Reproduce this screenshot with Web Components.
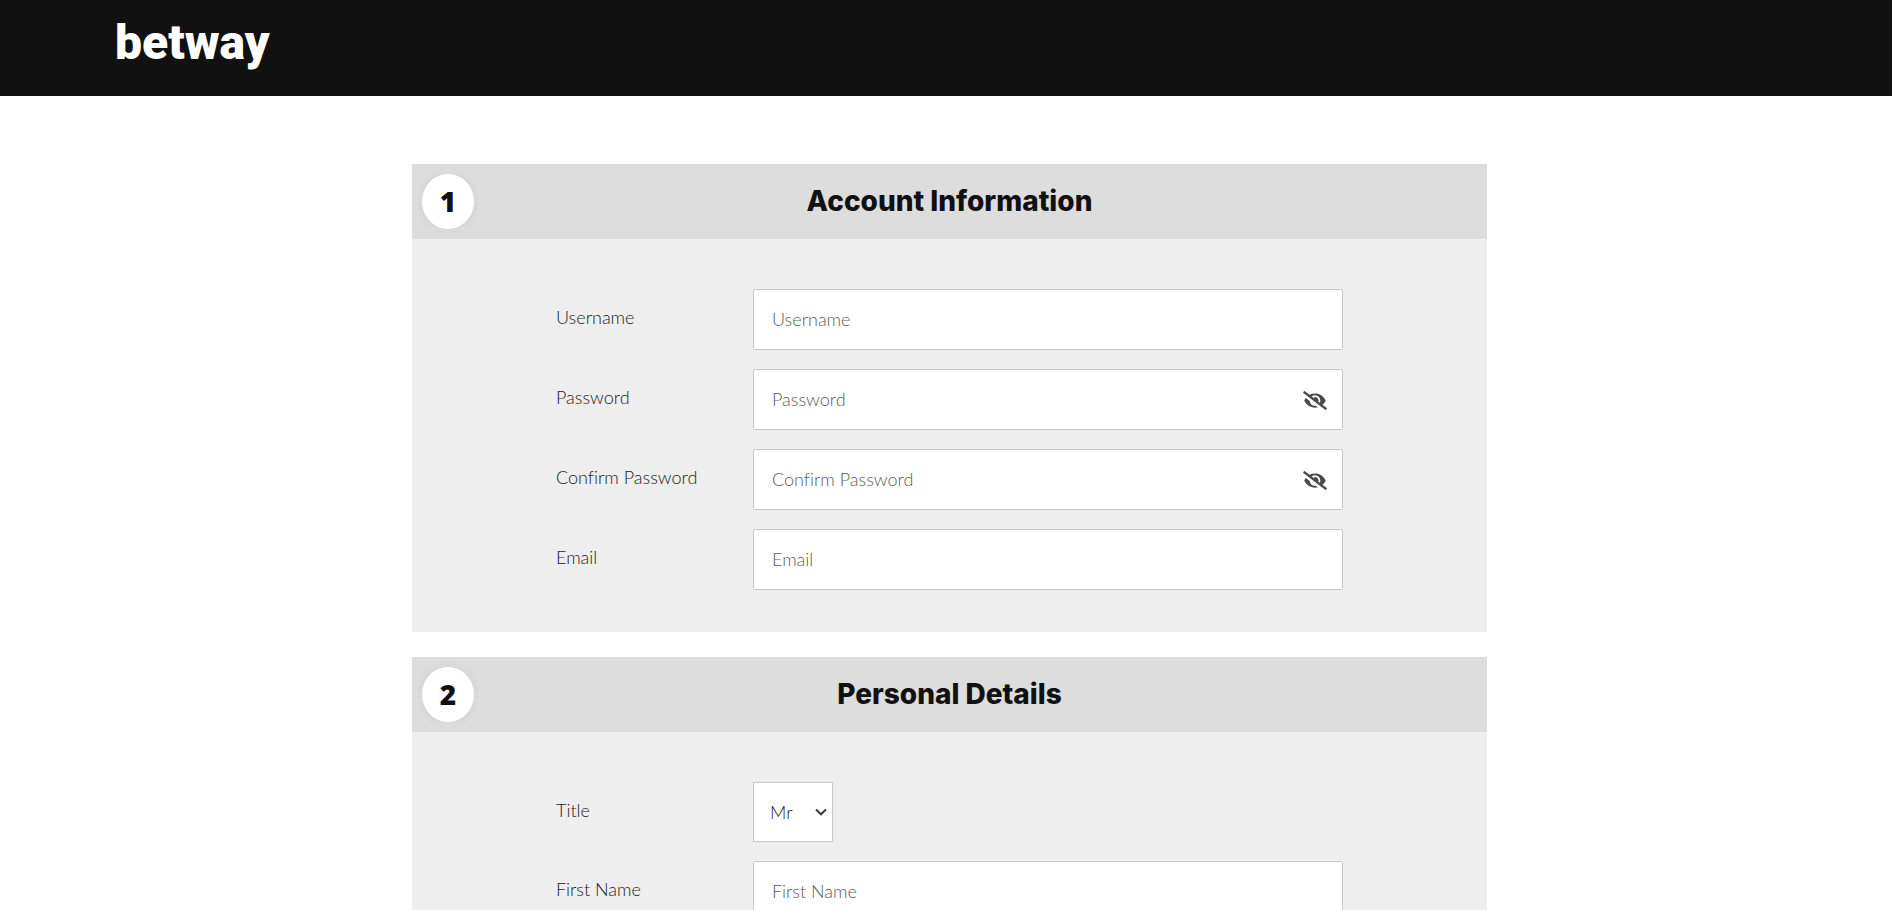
<!DOCTYPE html>
<html lang="en">
<head>
<meta charset="utf-8">
<meta name="viewport" content="width=device-width, initial-scale=1">
<title>betway</title>
<style>
  html,
  body {
    height: 100%;
    overflow: hidden;
  }

  body {
    margin: 0;
    background: #fff;
    color: #222;
    font-family: Lato, "Liberation Sans", sans-serif;
    font-size: 18px;
    font-weight: 300;
    font-variant-ligatures: none;
    --heading-font: Inter, "Open Sans", sans-serif;
    --number-font: "Open Sans", sans-serif;
    --logo-font: Roboto, sans-serif;
    --heading-color: #111;
    --border-color: #c8c8c8;
  }

  .page {
    height: 100%;
    overflow-y: auto;
    scrollbar-width: none;
  }
</style>
</head>
<body>

<div class="page">
  <site-header>betway</site-header>

  <register-form>
    <form-step number="1" heading="Account Information">
      <text-field label="Username"></text-field>
      <text-field label="Password" type="password"></text-field>
      <text-field label="Confirm Password" type="password"></text-field>
      <text-field label="Email" type="email"></text-field>
    </form-step>
    <form-step number="2" heading="Personal Details">
      <select-field label="Title" options="Mr,Ms"></select-field>
      <text-field label="First Name"></text-field>
    </form-step>
  </register-form>
</div>

<script>
// Top bar with the wordmark
class SiteHeader extends HTMLElement {
  constructor() {
    super();
    this.attachShadow({ mode: 'open' });
  }

  connectedCallback() {
    this.shadowRoot.innerHTML = `
      <style>
        :host {
          display: block;
          background: #111;
        }

        header {
          display: flex;
          align-items: center;
          height: 96px;
          padding: 0 115px;
          box-sizing: border-box;
        }

        a {
          color: #fff;
          font-family: var(--logo-font);
          font-size: 48px;
          font-weight: 900;
          line-height: 56px;
          padding-bottom: 10px;
          text-decoration: none;
        }
      </style>

      <header>
        <a href="#"><slot></slot></a>
      </header>
    `;
  }
}

// Centered column holding the steps
class RegisterForm extends HTMLElement {
  constructor() {
    super();
    this.attachShadow({ mode: 'open' });
  }

  connectedCallback() {
    this.shadowRoot.innerHTML = `
      <style>
        :host {
          display: block;
          padding: 68px 8px 68px 15px;
        }

        form {
          display: flex;
          flex-direction: column;
          gap: 25px;
          max-width: 1075px;
          margin: 0 auto;
        }
      </style>

      <form><slot></slot></form>
    `;
  }
}

class FormStep extends HTMLElement {
  constructor() {
    super();
    this.attachShadow({ mode: 'open' });
  }

  connectedCallback() {
    const number = this.getAttribute('number') || '';
    const heading = this.getAttribute('heading') || '';

    this.shadowRoot.innerHTML = `
      <style>
        :host {
          display: block;
          background: #eee;
        }

        .head {
          display: grid;
          grid-template-columns: 52px 1fr 52px;
          align-items: center;
          padding: 10px;
          background: #ddd;
          color: var(--heading-color);
          font-family: var(--heading-font);
          font-size: 28px;
          font-weight: 800;
          line-height: 55px;
          text-align: center;
        }

        .number {
          background: #fff;
          border-radius: 50%;
          box-shadow: 0 0 10px rgba(0, 0, 0, 0.06);
          font-family: var(--number-font);
        }

        h2 {
          margin: 0;
          font-size: inherit;
          font-weight: inherit;
        }

        .body {
          display: flex;
          flex-direction: column;
          gap: 19px;
          padding: 50px 144px 42px;
        }

        @media (max-width: 768px) {
          .body {
            padding: 24px 16px;
          }
        }
      </style>

      <section>
        <div class="head">
          <span class="number">${number}</span>
          <h2>${heading}</h2>
        </div>
        <div class="body"><slot></slot></div>
      </section>
    `;
  }
}

// Shared row layout of the fields
const fieldStyles = `
  :host {
    display: grid;
    grid-template-columns: 197px 1fr;
    align-items: center;
  }

  label {
    line-height: 24px;
    padding-bottom: 5px;
  }

  .control {
    display: grid;
    align-items: center;
  }

  input,
  select {
    grid-area: 1 / 1;
    box-sizing: border-box;
    width: 100%;
    background: #fff;
    border: 1px solid var(--border-color);
    color: inherit;
    font: inherit;
  }

  input:focus,
  select:focus {
    outline: none;
    border-color: #888;
  }

  @media (max-width: 768px) {
    :host {
      grid-template-columns: 1fr;
    }
  }
`;

const eyeOffIcon = `
  <svg viewBox="0 0 640 512" width="24" height="19" fill="#4a4a4a" aria-hidden="true">
    <path d="M320 400c-75.85 0-137.25-58.71-142.9-133.11L72.2 185.82c-13.79 17.3-26.48 35.59-36.72 55.59a32.35 32.35 0 0 0 0 29.19C89.71 376.41 197.07 448 320 448c26.91 0 52.87-4 77.89-10.46L346 397.39a144.13 144.13 0 0 1-26 2.61zm313.82 58.1l-110.55-85.44a331.25 331.25 0 0 0 81.25-102.07 32.35 32.35 0 0 0 0-29.19C550.29 135.59 442.93 64 320 64a308.15 308.15 0 0 0-147.32 37.7L45.46 3.37A16 16 0 0 0 23 6.18L3.37 31.45A16 16 0 0 0 6.18 53.9l588.36 454.73a16 16 0 0 0 22.46-2.81l19.64-25.27a16 16 0 0 0-2.82-22.45zm-183.72-142l-39.3-30.38A94.75 94.75 0 0 0 416 256a94.76 94.76 0 0 0-121.31-92.21A47.65 47.65 0 0 1 304 192a46.64 46.64 0 0 1-1.54 10l-73.61-56.89A142.31 142.31 0 0 1 320 112a143.92 143.92 0 0 1 144 144c0 21.63-5.29 41.79-13.9 60.11z"/>
  </svg>
`;

const chevronIcon = `
  <svg viewBox="0 0 12 8" width="12" height="8" fill="none" stroke="#3c3c40" stroke-width="2" aria-hidden="true">
    <path d="M1 1.5L6 6.3L11 1.5"/>
  </svg>
`;

class TextField extends HTMLElement {
  constructor() {
    super();
    this.attachShadow({ mode: 'open' });
  }

  connectedCallback() {
    const label = this.getAttribute('label') || '';
    const type = this.getAttribute('type') || 'text';
    const isPassword = type === 'password';

    this.shadowRoot.innerHTML = `
      <style>
        ${fieldStyles}

        input {
          height: 61px;
          padding: 0 18px 2px;
          border-radius: 2px;
        }

        input[type="password"] {
          padding-right: 56px;
        }

        input::placeholder {
          color: #5c5c5c;
        }

        button {
          grid-area: 1 / 1;
          justify-self: end;
          display: flex;
          margin-right: 16px;
          padding: 2px 0 0;
          border: 0;
          background: none;
          cursor: pointer;
        }
      </style>

      <label for="field">${label}</label>
      <div class="control">
        <input id="field" type="${type}" placeholder="${label}">
        ${isPassword ? `<button type="button" aria-label="Show password">${eyeOffIcon}</button>` : ''}
      </div>
    `;

    if (isPassword) {
      this.shadowRoot.querySelector('button').addEventListener('click', () => this.toggle());
    }
  }

  toggle() {
    const input = this.shadowRoot.querySelector('input');
    input.type = input.type === 'password' ? 'text' : 'password';
  }
}

class SelectField extends HTMLElement {
  constructor() {
    super();
    this.attachShadow({ mode: 'open' });
  }

  connectedCallback() {
    const label = this.getAttribute('label') || '';
    const options = (this.getAttribute('options') || '').split(',');

    this.shadowRoot.innerHTML = `
      <style>
        ${fieldStyles}

        .control {
          justify-self: start;
          width: 80px;
        }

        select {
          appearance: none;
          height: 60px;
          padding: 0 24px 0 16px;
          border-radius: 0;
        }

        svg {
          grid-area: 1 / 1;
          justify-self: end;
          margin-right: 6px;
          pointer-events: none;
        }
      </style>

      <label for="field">${label}</label>
      <div class="control">
        <select id="field">
          ${options.map((option) => `<option>${option}</option>`).join('')}
        </select>
        ${chevronIcon}
      </div>
    `;
  }
}

customElements.define('site-header', SiteHeader);
customElements.define('register-form', RegisterForm);
customElements.define('form-step', FormStep);
customElements.define('text-field', TextField);
customElements.define('select-field', SelectField);
</script>
</body>
</html>
